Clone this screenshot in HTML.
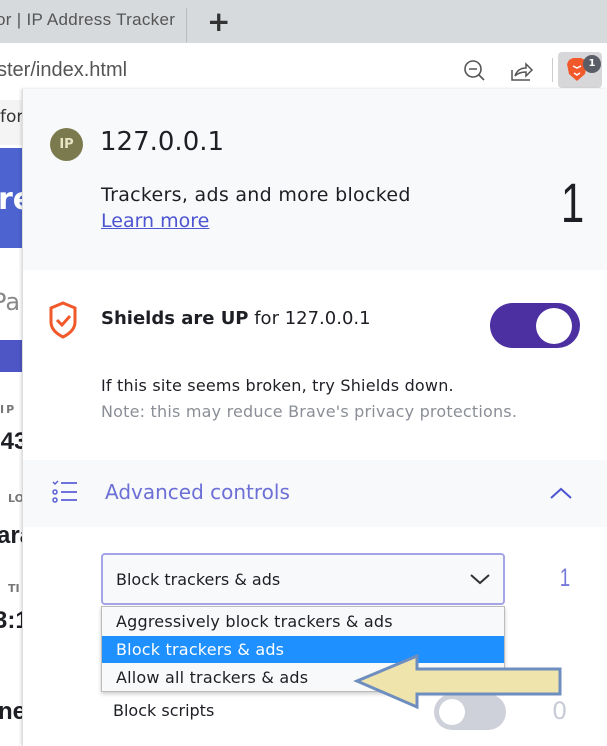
<!DOCTYPE html>
<html><head><style>
*{margin:0;padding:0;box-sizing:border-box}
body{width:607px;height:746px;overflow:hidden;position:relative;background:#fff;font-family:"DejaVu Sans","Liberation Sans",sans-serif;color:#1d1f25}
.a{position:absolute;white-space:nowrap}
.l{font-family:"Liberation Sans",sans-serif}
</style></head><body>
<div class="a" style="left:0;top:0;width:607px;height:43px;background:#d7dadd"></div>
<div class="a l" style="left:-4px;top:10px;font-size:17px;color:#555;letter-spacing:0.3px">or | IP Address Tracker</div>
<div class="a" style="left:186px;top:8px;width:1px;height:34px;background:#b8bbbf"></div>
<div class="a" style="left:207px;top:5px;font-size:28px;color:#333;font-weight:bold">+</div>
<div class="a" style="left:0;top:49px;width:607px;height:40px;background:#fff"></div>
<div class="a l" style="left:-3px;top:59px;font-size:20px;color:#555">ster/index.html</div>
<svg class="a" style="left:462px;top:58px" width="26" height="26" viewBox="0 0 26 26"><circle cx="11" cy="11" r="8" fill="none" stroke="#555" stroke-width="1.6"/><path d="M7 11h8M17 17l5 5" stroke="#555" stroke-width="1.6"/></svg>
<svg class="a" style="left:509px;top:58px" width="26" height="26" viewBox="0 0 26 26"><path d="M3 12v10h18M6 18c2-6 6-8 11-8v-4l6 6-6 6v-4c-5 0-8 1-11 4" fill="none" stroke="#555" stroke-width="1.5"/></svg>
<div class="a" style="left:552px;top:58px;width:1px;height:24px;background:#ccc"></div>
<div class="a" style="left:558px;top:52px;width:44px;height:36px;background:#d7d7d9;border-radius:4px"></div>
<svg class="a" style="left:566px;top:57px" width="22" height="26" viewBox="0 0 22 26"><path d="M3 3l4-2h8l4 2 2 4-2 10-8 7-8-7-2-10z" fill="#f1582a"/><path d="M7 9l4 2 4-2M8 16l3 2 3-2" stroke="#fff" stroke-width="1.5" fill="none"/></svg>
<div class="a" style="left:583px;top:55px;width:18px;height:18px;border-radius:50%;background:#5a5c66;color:#fff;font-size:10px;text-align:center;line-height:18px;font-weight:bold">1</div>
<div class="a" style="left:0;top:100px;width:23px;height:45px;background:#f4f4f4"></div>
<div class="a" style="left:0;top:107px;font-size:17px;color:#333">for</div>
<div class="a" style="left:0;top:148px;width:23px;height:100px;background:#4d63cf"></div>
<div class="a" style="left:-2px;top:182px;font-size:30px;color:#fff;font-weight:bold">re</div>
<div class="a" style="left:-8px;top:288px;font-size:24px;color:#888">Pa</div>
<div class="a" style="left:0;top:340px;width:23px;height:32px;background:#4d56c4"></div>
<div class="a" style="left:0;top:403px;font-size:11px;color:#777;font-weight:bold;letter-spacing:2px">IP A</div>
<div class="a l" style="left:-6px;top:428px;font-size:24px;font-weight:bold">.43</div>
<div class="a" style="left:8px;top:492px;font-size:11px;color:#777;font-weight:bold">LO</div>
<div class="a l" style="left:-3px;top:522px;font-size:24px;font-weight:bold">ara</div>
<div class="a" style="left:8px;top:582px;font-size:11px;color:#777;font-weight:bold">TI</div>
<div class="a l" style="left:-6px;top:607px;font-size:24px;font-weight:bold">3:1</div>
<div class="a l" style="left:-2px;top:698px;font-size:24px;font-weight:bold">ne</div>
<div class="a" style="left:22px;top:89px;width:585px;height:657px;background:#fff;border-left:1px solid #ddd;box-shadow:-1px 0 3px rgba(0,0,0,.15)"></div>
<div class="a" style="left:23px;top:89px;width:584px;height:181px;background:#f8f9fa"></div>
<div class="a" style="left:50px;top:128px;width:33px;height:33px;border-radius:50%;background:#7b7a4e;color:#e9e6c8;font-size:13px;text-align:center;line-height:33px;font-weight:bold">IP</div>
<div class="a" style="left:100px;top:127px;font-size:26px;color:#1d1f25">127.0.0.1</div>
<div class="a" style="left:101px;top:184px;font-size:19px;letter-spacing:0.3px">Trackers, ads and more blocked</div>
<div class="a" style="left:101px;top:210px;font-size:19px;color:#4c54d2;text-decoration:underline">Learn more</div>
<div class="a l" style="left:557px;top:170px;font-size:56px;color:#1d1f25;transform:scaleX(.75)">1</div>
<svg class="a" style="left:49px;top:301px" width="28" height="38" viewBox="0 0 28 38"><path d="M14 2l12 5v14c0 7-6 12-12 15C8 33 2 28 2 21V7z" fill="none" stroke="#f1582a" stroke-width="3"/><path d="M8 19l5 5 8-9" fill="none" stroke="#f1582a" stroke-width="3"/></svg>
<div class="a" style="left:101px;top:308px;font-size:18px"><b>Shields are UP</b> for 127.0.0.1</div>
<div class="a" style="left:490px;top:303px;width:90px;height:45px;border-radius:23px;background:#4c2fa0"></div>
<div class="a" style="left:536px;top:308px;width:36px;height:36px;border-radius:50%;background:#fff"></div>
<div class="a" style="left:101px;top:376px;font-size:16px;letter-spacing:0.2px">If this site seems broken, try Shields down.</div>
<div class="a" style="left:101px;top:402px;font-size:16px;color:#8a8e96;letter-spacing:0.2px">Note: this may reduce Brave's privacy protections.</div>
<div class="a" style="left:23px;top:460px;width:584px;height:67px;background:#f8f9fa"></div>
<svg class="a" style="left:52px;top:480px" width="26" height="24" viewBox="0 0 26 24"><path d="M1 2l2 2 3-3" fill="none" stroke="#5a5fd6" stroke-width="1.5"/><circle cx="3" cy="12" r="2" fill="none" stroke="#5a5fd6" stroke-width="1.5"/><circle cx="3" cy="20" r="2" fill="none" stroke="#5a5fd6" stroke-width="1.5"/><path d="M9 3h16M9 12h16M9 20h16" stroke="#5a5fd6" stroke-width="1.8"/></svg>
<div class="a" style="left:105px;top:480px;font-size:20px;color:#6b6fd6">Advanced controls</div>
<svg class="a" style="left:549px;top:486px" width="24" height="14" viewBox="0 0 24 14"><path d="M2 12l10-9 10 9" fill="none" stroke="#4c54d2" stroke-width="2"/></svg>
<div class="a" style="left:101px;top:553px;width:404px;height:52px;border:2px solid #a3a5e6;border-radius:4px;background:#f8f9fa"></div>
<div class="a" style="left:116px;top:570px;font-size:16px">Block trackers &amp; ads</div>
<svg class="a" style="left:469px;top:572px" width="22" height="14" viewBox="0 0 22 14"><path d="M2 3l9 8 9-8" fill="none" stroke="#333" stroke-width="2"/></svg>
<div class="a l" style="left:558px;top:564px;font-size:25px;color:#7478d9;transform:scaleX(.75)">1</div>
<div class="a" style="left:101px;top:606px;width:404px;height:86px;background:#f8f9fa;border:1px solid #bbb;box-shadow:0 2px 4px rgba(0,0,0,.2)"></div>
<div class="a" style="left:102px;top:636px;width:402px;height:27px;background:#1e90ff"></div>
<div class="a" style="left:116px;top:612px;font-size:16px;letter-spacing:0.2px">Aggressively block trackers &amp; ads</div>
<div class="a" style="left:116px;top:640px;font-size:16px;color:#fff;letter-spacing:0.2px">Block trackers &amp; ads</div>
<div class="a" style="left:116px;top:668px;font-size:16px;letter-spacing:0.2px">Allow all trackers &amp; ads</div>
<div class="a" style="left:113px;top:701px;font-size:16px">Block scripts</div>
<div class="a" style="left:434px;top:694px;width:72px;height:36px;border-radius:18px;background:#ced0da"></div>
<div class="a" style="left:439px;top:699px;width:26px;height:26px;border-radius:50%;background:#fff"></div>
<div class="a" style="left:552px;top:697px;font-size:24px;color:#c8cbd8">0</div>
<svg class="a" style="left:350px;top:650px" width="215" height="62" viewBox="350 650 215 62"><path d="M357 681l60-25v13h143v25H417v13z" fill="#f0e4ad" stroke="#6e8ebf" stroke-width="3" stroke-linejoin="miter"/></svg>
</body></html>
